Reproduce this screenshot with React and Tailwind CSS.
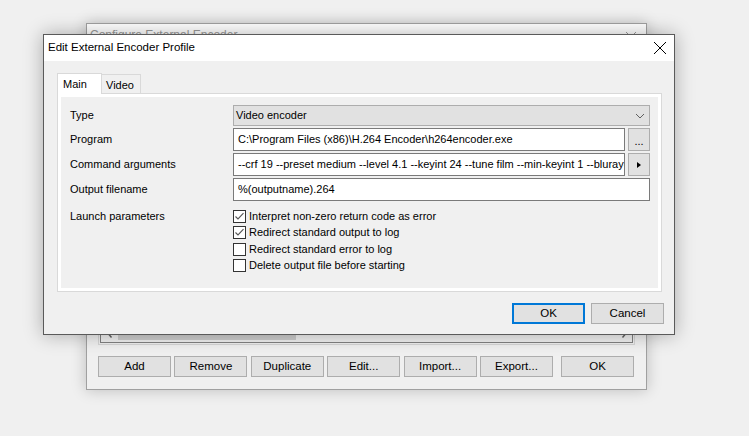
function Btn({ children, className = "", border = "border border-[#adadad]" }) {
  return (
    <div
      className={
        "h-[21px] w-[73px] flex items-center justify-center bg-[#e1e1e1] " + border + " " + className
      }
    >
      {children}
    </div>
  );
}

function Check({ checked, label }) {
  return (
    <div className="h-[16.5px] flex items-center">
      <div className="w-[13px] h-[13px] border border-[#333333] bg-white flex items-center justify-center">
        {checked && (
          <svg width="11" height="11" viewBox="0 0 11 11">
            <polyline points="1.5,5.5 4,8 9.5,2.2" fill="none" stroke="#555555" strokeWidth="1.1" />
          </svg>
        )}
      </div>
      <span className="ml-[3px] leading-none">{label}</span>
    </div>
  );
}

function Label({ children, className = "" }) {
  return <div className={"w-[163px] shrink-0 flex items-center " + className}>{children}</div>;
}

export default function App() {
  return (
    <div className="relative w-[749px] h-[436px] overflow-hidden bg-[#f0f0f0] font-['Liberation_Sans',Arial,sans-serif] text-[11px] text-black">
      {/* Background window */}
      <div className="absolute left-[86px] top-[23px] w-[561px] h-[367px] bg-[#f0f0f0] border border-[#a0a0a0] shadow-[0_0_14px_rgba(0,0,0,0.22)] flex flex-col">
        <div className="h-[30px] bg-white flex items-start justify-between pl-[3px] pr-[9px] pt-[4px] text-[#9a9a9a]">
          <span className="text-[12px] leading-[15px]">Configure External Encoder</span>
          <svg width="12" height="12" viewBox="0 0 12 12" className="mt-[3px]">
            <path d="M1 1L11 11M11 1L1 11" stroke="#9a9a9a" strokeWidth="1" />
          </svg>
        </div>
        <div className="flex-1 flex flex-col pl-[11px] pr-[11px] pb-[12px]">
          <div className="flex-1 border border-[#d6d6d6] p-[1px] flex flex-col">
            <div className="flex-1 border border-[#828282] bg-white flex flex-col justify-end">
              <div className="h-[17px] bg-[#f0f0f0] flex items-center">
                <div className="w-[17px] flex justify-center">
                  <svg width="6" height="8" viewBox="0 0 6 8">
                    <path d="M4.5 0.5L1.5 4L4.5 7.5" fill="none" stroke="#606060" strokeWidth="1.4" />
                  </svg>
                </div>
                <div className="w-[178px] h-[13px] bg-[#cdcdcd]" />
                <div className="flex-1" />
                <div className="w-[17px] flex justify-center">
                  <svg width="6" height="8" viewBox="0 0 6 8">
                    <path d="M1.5 0.5L4.5 4L1.5 7.5" fill="none" stroke="#606060" strokeWidth="1.4" />
                  </svg>
                </div>
              </div>
            </div>
          </div>
          <div className="mt-[11px] flex gap-[3.4px] pr-[1px] text-[11.5px]">
            <Btn>Add</Btn>
            <Btn>Remove</Btn>
            <Btn>Duplicate</Btn>
            <Btn>Edit...</Btn>
            <Btn>Import...</Btn>
            <Btn>Export...</Btn>
            <Btn className="ml-auto">OK</Btn>
          </div>
        </div>
      </div>

      {/* Dialog */}
      <div className="absolute left-[43px] top-[34px] w-[632px] h-[301px] bg-[#f0f0f0] border border-[#5a5a5a] shadow-[0_0_18px_rgba(0,0,0,0.3)] flex flex-col">
        <div className="h-[26px] shrink-0 bg-white flex items-center justify-between pl-[4px] pr-[7px]">
          <span className="text-[11.5px]">Edit External Encoder Profile</span>
          <svg width="14" height="14" viewBox="0 0 14 14">
            <path d="M1 1L13 13M13 1L1 13" stroke="#000000" strokeWidth="1" />
          </svg>
        </div>

        <div className="flex items-end pl-[13px] pt-[12px]">
          <div className="relative z-10 -mb-px h-[21px] w-[45px] bg-white border border-b-0 border-[#d9d9d9] pl-[5px] pt-[2px]">
            Main
          </div>
          <div className="h-[19px] w-[39px] border border-b-0 border-l-0 border-[#d9d9d9] pl-[4px] pt-[2px]">
            Video
          </div>
        </div>

        <div className="ml-[13px] w-[605px] h-[199px] border border-[#d9d9d9] bg-white p-[3px]">
          <div className="h-full bg-[#f0f0f0] pl-[9px] pr-[8px] pt-[8px] flex flex-col">
            <div className="flex h-[21px]">
              <Label>Type</Label>
              <div className="flex-1 bg-[#e1e1e1] border border-[#adadad] flex items-center justify-between pl-[2px] pr-[4px]">
                <span>Video encoder</span>
                <svg width="10" height="6" viewBox="0 0 10 6">
                  <path d="M1 1L5 5L9 1" fill="none" stroke="#606060" strokeWidth="1" />
                </svg>
              </div>
            </div>

            <div className="flex h-[23px] mt-[2px]">
              <Label>Program</Label>
              <div className="flex-1 bg-white border border-[#7a7a7a] flex items-center pl-[4px] overflow-hidden whitespace-nowrap">
                C:\Program Files (x86)\H.264 Encoder\h264encoder.exe
              </div>
              <div className="ml-[3px] w-[22px] bg-[#e1e1e1] border border-[#adadad] flex items-end justify-center pb-[3px] leading-none">
                ...
              </div>
            </div>

            <div className="flex h-[23px] mt-[2px]">
              <Label>Command arguments</Label>
              <div className="flex-1 min-w-0 bg-white border border-[#7a7a7a] flex items-center pl-[4px] overflow-hidden whitespace-nowrap">
                --crf 19 --preset medium --level 4.1 --keyint 24 --tune film --min-keyint 1 --bluray-compat
              </div>
              <div className="ml-[3px] w-[22px] bg-[#e1e1e1] border border-[#adadad] flex items-center justify-center">
                <svg width="4" height="6" viewBox="0 0 4 6">
                  <path d="M0 0L4 3L0 6Z" fill="#000000" />
                </svg>
              </div>
            </div>

            <div className="flex h-[23px] mt-[2px]">
              <Label>Output filename</Label>
              <div className="flex-1 bg-white border border-[#7a7a7a] flex items-center pl-[4px]">
                %(outputname).264
              </div>
            </div>

            <div className="flex mt-[7px]">
              <Label className="h-[16.5px] self-start">Launch parameters</Label>
              <div className="flex flex-col">
                <Check checked label="Interpret non-zero return code as error" />
                <Check checked label="Redirect standard output to log" />
                <Check label="Redirect standard error to log" />
                <Check label="Delete output file before starting" />
              </div>
            </div>
          </div>
        </div>

        <div className="mt-[11px] flex justify-end gap-[6px] pr-[10px] text-[11.5px]">
          <Btn border="border-2 border-[#0078d7]">OK</Btn>
          <Btn>Cancel</Btn>
        </div>
      </div>
    </div>
  );
}
